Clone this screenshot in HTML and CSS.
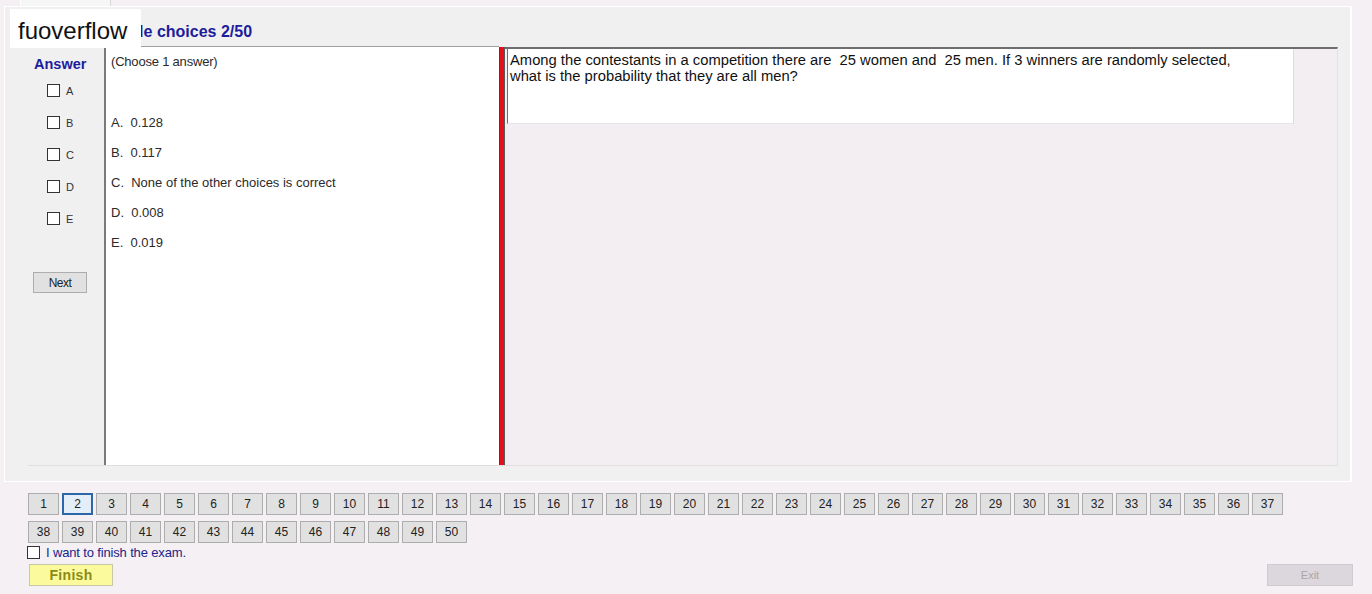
FILE: index.html
```html
<!DOCTYPE html>
<html>
<head>
<meta charset="utf-8">
<link rel="stylesheet" href="styles.css">
</head>
<body>
<div class="page">
  <div class="tabstrip"><div class="tab"></div></div>
  <div class="panel">
    <div class="title">Multiple choices 2/50</div>
    <div class="frame">
      <div class="answer-col">
        <div class="answer-head">Answer</div>
        <div class="cb-list">
          <label class="cb-row"><span class="box"></span><span>A</span></label>
          <label class="cb-row"><span class="box"></span><span>B</span></label>
          <label class="cb-row"><span class="box"></span><span>C</span></label>
          <label class="cb-row"><span class="box"></span><span>D</span></label>
          <label class="cb-row"><span class="box"></span><span>E</span></label>
        </div>
        <div class="btn next">Next</div>
      </div>
      <div class="options">
        <div class="choose">(Choose 1 answer)</div>
        <div class="opt-list">
          <div class="opt">A.&nbsp; 0.128</div>
          <div class="opt">B.&nbsp; 0.117</div>
          <div class="opt">C.&nbsp; None of the other choices is correct</div>
          <div class="opt">D.&nbsp; 0.008</div>
          <div class="opt">E.&nbsp; 0.019</div>
        </div>
      </div>
      <div class="splitter"></div>
      <div class="question-area">
        <div class="question">Among the contestants in a competition there are  25 women and  25 men. If 3 winners are randomly selected,
what is the probability that they are all men?</div>
      </div>
    </div>
  </div>
  <div class="bottom">
    <div class="nums">
      <div class="num">1</div><div class="num sel">2</div><div class="num">3</div><div class="num">4</div><div class="num">5</div><div class="num">6</div><div class="num">7</div><div class="num">8</div><div class="num">9</div><div class="num">10</div>
      <div class="num">11</div><div class="num">12</div><div class="num">13</div><div class="num">14</div><div class="num">15</div><div class="num">16</div><div class="num">17</div><div class="num">18</div><div class="num">19</div><div class="num">20</div>
      <div class="num">21</div><div class="num">22</div><div class="num">23</div><div class="num">24</div><div class="num">25</div><div class="num">26</div><div class="num">27</div><div class="num">28</div><div class="num">29</div><div class="num">30</div>
      <div class="num">31</div><div class="num">32</div><div class="num">33</div><div class="num">34</div><div class="num">35</div><div class="num">36</div><div class="num">37</div><div class="num">38</div><div class="num">39</div><div class="num">40</div>
      <div class="num">41</div><div class="num">42</div><div class="num">43</div><div class="num">44</div><div class="num">45</div><div class="num">46</div><div class="num">47</div><div class="num">48</div><div class="num">49</div><div class="num">50</div>
    </div>
    <label class="finish-check"><span class="box"></span><span>I want to finish the exam.</span></label>
    <div class="actions">
      <div class="btn finish">Finish</div>
      <div class="btn exit">Exit</div>
    </div>
  </div>
  <div class="logo">fuoverflow</div>
</div>
</body>
</html>
```

FILE: styles.css
```css
* { box-sizing: border-box; }
html, body { margin: 0; padding: 0; }
body {
  background: #f4f0f3;
  font-family: "Liberation Sans", Arial, sans-serif;
  color: #1e1e1e;
}
.page {
  position: relative;
  width: 1372px;
  height: 594px;
  overflow: hidden;
}
.tabstrip {
  height: 6px;
  padding-left: 20px;
}
.tab {
  width: 91px;
  height: 6px;
  border-left: 1px solid #ffffff;
  border-right: 1px solid #d8d8d8;
  background: #f6f6f6;
}
.panel {
  margin-left: 4px;
  width: 1348px;
  height: 476px;
  border: 1px solid #ffffff;
  border-right: 2px solid #ffffff;
  background: #f0f0f0;
  padding: 16px 12px 0 23px;
}
.title {
  height: 19px;
  margin-left: 64px;
  font-size: 16px;
  font-weight: bold;
  color: #1d1d9c;
  line-height: 18px;
}
.frame {
  margin-top: 4px;
  height: 420px;
  display: flex;
  border-bottom: 1px solid #e2dde1;
}
.answer-col {
  width: 76px;
  background: #f0f0f0;
  display: flex;
  flex-direction: column;
  padding-top: 10px;
}
.answer-head {
  padding-left: 6px;
  font-size: 14.5px;
  font-weight: bold;
  color: #1d1d9c;
  line-height: 16px;
}
.cb-list {
  display: flex;
  flex-direction: column;
  gap: 19px;
  padding-left: 19px;
  margin-top: 12px;
}
.cb-row {
  display: flex;
  align-items: center;
  gap: 6px;
  font-size: 11px;
  color: #333;
  height: 13px;
}
.box {
  display: inline-block;
  width: 13px;
  height: 13px;
  border: 1px solid #333333;
  background: #ffffff;
}
.btn {
  display: flex;
  align-items: center;
  justify-content: center;
  font-size: 12px;
}
.next {
  margin: 47px 0 0 5px;
  width: 54px;
  height: 21px;
  background: #e1e1e1;
  border: 1px solid #adadad;
  color: #222;
  letter-spacing: -0.5px;
}
.options {
  width: 395px;
  background: #ffffff;
  border-left: 2px solid #7a7a7a;
  border-top: 1px solid #a0a0a0;
  padding: 7px 0 0 5px;
  font-size: 13px;
  color: #2a2a2a;
}
.choose {
  line-height: 16px;
  letter-spacing: -0.2px;
}
.opt-list {
  margin-top: 45px;
  display: flex;
  flex-direction: column;
  gap: 14px;
}
.opt {
  line-height: 16px;
}
.splitter {
  width: 6px;
  background: #e3101c;
  border-left: 1px solid #8a2026;
  border-right: 1px solid #5a5a5a;
  margin-top: 1px;
}
.question-area {
  flex: 1;
  background: #f3eef1;
  border-top: 2px solid #6e6e6e;
  border-right: 1px solid #e4e0e3;
  padding-left: 2px;
  margin-top: 1px;
}
.question {
  width: 787px;
  height: 75px;
  background: #ffffff;
  border-left: 1px solid #6e6e6e;
  border-right: 1px solid #dcdcdc;
  border-bottom: 1px solid #e6e6e6;
  padding: 3px 0 0 2px;
  font-size: 14.75px;
  line-height: 16px;
  white-space: pre-wrap;
  color: #111;
}
.bottom {
  padding: 11px 0 0 28px;
}
.nums {
  width: 1260px;
  display: flex;
  flex-wrap: wrap;
  gap: 6px 3px;
}
.num {
  width: 31px;
  height: 22px;
  background: #e1e1e1;
  border: 1px solid #adadad;
  display: flex;
  align-items: center;
  justify-content: center;
  font-size: 12px;
  color: #222;
}
.num.sel {
  border: 2px solid #2c68a8;
  background: #e3eef8;
}
.finish-check {
  display: flex;
  align-items: center;
  gap: 6px;
  margin: 2px 0 0 -1px;
  font-size: 13px;
  color: #23238a;
  height: 15px;
  letter-spacing: -0.15px;
}
.actions {
  display: flex;
  justify-content: space-between;
  padding: 4px 19px 0 1px;
}
.finish {
  width: 84px;
  height: 22px;
  background: #fbfa9d;
  border: 1px solid #c9c7a6;
  font-size: 14px;
  font-weight: bold;
  color: #8a8b16;
  letter-spacing: 0.3px;
}
.exit {
  width: 86px;
  height: 22px;
  background: #dcd7dc;
  border: 1px solid #d0cbd0;
  color: #a9a6a9;
  font-size: 11px;
}
.logo {
  position: absolute;
  left: 10px;
  top: 9px;
  width: 131px;
  height: 39px;
  background: #ffffff;
  padding: 5px 0 0 8px;
  font-size: 24px;
  line-height: 34px;
  color: #111;
}
```
